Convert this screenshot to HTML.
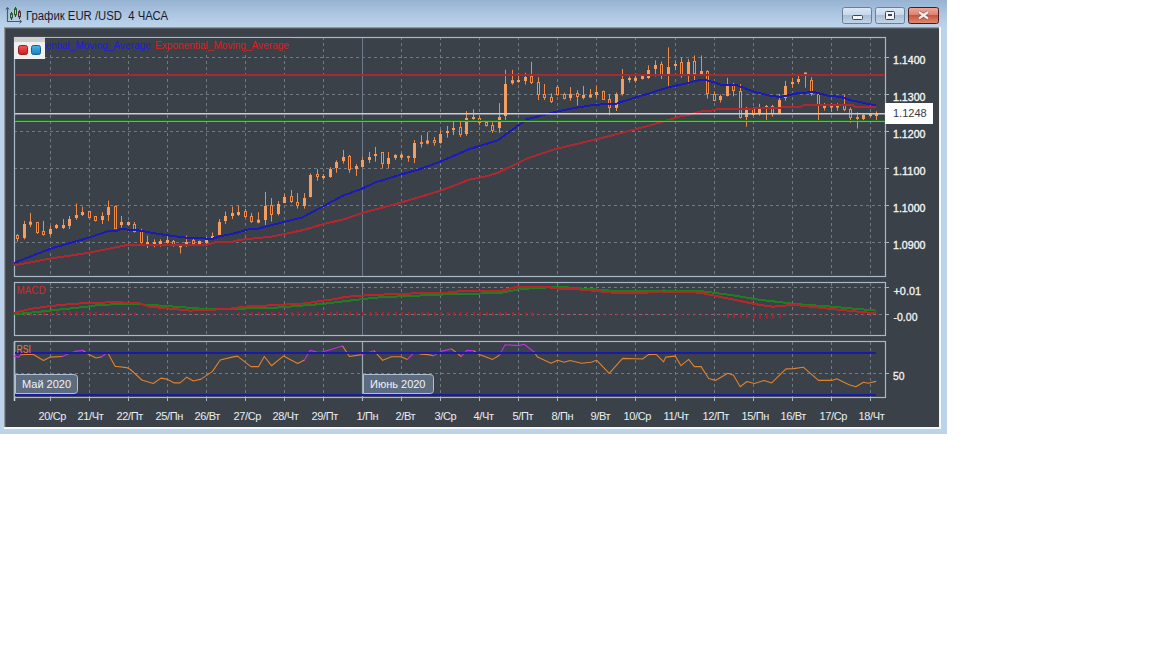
<!DOCTYPE html>
<html><head><meta charset="utf-8"><style>
html,body{margin:0;padding:0;background:#fff;width:1152px;height:648px;overflow:hidden}
#win{position:absolute;left:0;top:0;width:947px;height:434px;background:#bcd3eb}
#title{position:absolute;left:0;top:0;width:947px;height:27px;background:linear-gradient(#97b3d2,#b3cbe5 70%,#bcd4ea)}
#inner{position:absolute;left:4px;top:27px;width:937px;height:402px;background:#f4f8fb}
#dark{position:absolute;left:4px;top:27px;width:935px;height:400px;background:#3b4149;box-shadow:inset 1px 1px 0 #8e959c, inset 2px 2px 0 #555a61}
svg{position:absolute;left:0;top:0}
</style></head><body>
<div id="win"><div id="title"></div><div id="inner"></div><div id="dark"></div>

</div>
<svg width="1152" height="648" viewBox="0 0 1152 648">
<text x="26" y="20" font-family="Liberation Sans, sans-serif" font-size="12" fill="#1a1a2a" textLength="142" lengthAdjust="spacingAndGlyphs" xml:space="preserve">График EUR /USD  4 ЧАСА</text>
<!-- title icon -->
<path d="M7.5 8V21.5H21" stroke="#4a5a70" stroke-width="1.2" fill="none"/>
<path d="M5.8 9.5L7.5 7.3L9.2 9.5M19.5 19.8L21.7 21.5L19.5 23.2" stroke="#4a5a70" stroke-width="1" fill="none"/>
<path d="M11.5 12V20M15.5 7V17M19.5 10V19" stroke="#2e3e36" stroke-width="1"/>
<rect x="10.5" y="13.8" width="2" height="4" fill="#a8d098" stroke="#2c5a2c" stroke-width="1"/>
<rect x="14.5" y="8.8" width="2" height="6" fill="#a8d098" stroke="#2c5a2c" stroke-width="1"/>
<rect x="18.5" y="11.8" width="2" height="5" fill="#c89090" stroke="#5a3038" stroke-width="1"/>
<!-- buttons -->
<defs>
<linearGradient id="bg1" x1="0" y1="0" x2="0" y2="1"><stop offset="0" stop-color="#dce8f4"/><stop offset="0.45" stop-color="#c6d8ea"/><stop offset="0.5" stop-color="#a9bfd6"/><stop offset="1" stop-color="#c4d6e8"/></linearGradient>
<linearGradient id="bg2" x1="0" y1="0" x2="0" y2="1"><stop offset="0" stop-color="#f0a898"/><stop offset="0.45" stop-color="#de8270"/><stop offset="0.5" stop-color="#c8553e"/><stop offset="1" stop-color="#e08c74"/></linearGradient>
</defs>
<rect x="842.5" y="7.5" width="29" height="16" rx="2" fill="url(#bg1)" stroke="#6c7e94"/>
<rect x="875.5" y="7.5" width="29" height="16" rx="2" fill="url(#bg1)" stroke="#6c7e94"/>
<rect x="908.5" y="7.5" width="30" height="16" rx="2" fill="url(#bg2)" stroke="#4a1c1c"/>
<rect x="852.5" y="15.5" width="10" height="4" rx="1" fill="#f4f4f4" stroke="#3a4656"/>
<rect x="885.5" y="11.5" width="9" height="8" rx="1" fill="#f4f4f4" stroke="#3a4656"/><rect x="888" y="14" width="4" height="2" fill="#3a4656"/>
<path d="M919 12L928 18.5M928 12L919 18.5" stroke="#6a3030" stroke-width="3.6" opacity="0.6"/>
<path d="M919 12L928 18.5M928 12L919 18.5" stroke="#f4f0f0" stroke-width="2.2"/>
<path d="M50.5 37V276 M50.5 283V335 M50.5 342V397 M89.5 37V276 M89.5 283V335 M89.5 342V397 M128.5 37V276 M128.5 283V335 M128.5 342V397 M167.5 37V276 M167.5 283V335 M167.5 342V397 M206.5 37V276 M206.5 283V335 M206.5 342V397 M245.5 37V276 M245.5 283V335 M245.5 342V397 M284.5 37V276 M284.5 283V335 M284.5 342V397 M323.5 37V276 M323.5 283V335 M323.5 342V397 M362.5 37V276 M362.5 283V335 M362.5 342V397 M401.5 37V276 M401.5 283V335 M401.5 342V397 M440.5 37V276 M440.5 283V335 M440.5 342V397 M479.5 37V276 M479.5 283V335 M479.5 342V397 M518.5 37V276 M518.5 283V335 M518.5 342V397 M557.5 37V276 M557.5 283V335 M557.5 342V397 M596.5 37V276 M596.5 283V335 M596.5 342V397 M635.5 37V276 M635.5 283V335 M635.5 342V397 M675.5 37V276 M675.5 283V335 M675.5 342V397 M714.5 37V276 M714.5 283V335 M714.5 342V397 M753.5 37V276 M753.5 283V335 M753.5 342V397 M792.5 37V276 M792.5 283V335 M792.5 342V397 M831.5 37V276 M831.5 283V335 M831.5 342V397 M870.5 37V276 M870.5 283V335 M870.5 342V397 M14 57.5H885 M14 94.5H885 M14 131.5H885 M14 168.5H885 M14 205.5H885 M14 242.5H885 M50 287.5H885 M15 314.5H885 M15 373.5H885" stroke="#6f7a85" stroke-width="1" stroke-dasharray="3 3" fill="none"/>
<path d="M362.5 38V276M362.5 283V335" stroke="#6c7a89" stroke-width="1" fill="none"/>
<path d="M362.5 342V401" stroke="#9aaab4" stroke-width="1.2" fill="none"/>
<path d="M14.5 342V401" stroke="#c9ddd8" stroke-width="1.5" fill="none"/>
<path d="M50.5 397V401 M89.5 397V401 M128.5 397V401 M167.5 397V401 M206.5 397V401 M245.5 397V401 M284.5 397V401 M323.5 397V401 M362.5 397V401 M401.5 397V401 M440.5 397V401 M479.5 397V401 M518.5 397V401 M557.5 397V401 M596.5 397V401 M635.5 397V401 M675.5 397V401 M714.5 397V401 M753.5 397V401 M792.5 397V401 M831.5 397V401 M870.5 397V401 M885 57.5H889 M885 94.5H889 M885 131.5H889 M885 168.5H889 M885 205.5H889 M885 242.5H889 M885 287.5H889 M885 314.5H889 M885 373.5H889" stroke="#a7b8c8" stroke-width="1" fill="none"/>
<rect x="14.5" y="37.5" width="871" height="239" fill="none" stroke="#a7b8c8" stroke-width="1.2"/>
<rect x="14.5" y="282.5" width="871" height="53" fill="none" stroke="#a7b8c8" stroke-width="1.2"/>
<rect x="14.5" y="341.5" width="871" height="56" fill="none" stroke="#a7b8c8" stroke-width="1.2"/>
<path d="M17.5 233.9V241.7 M24.5 220.9V239.4 M30.5 212.9V227.1 M37.5 221.9V233.9 M43.5 220.9V235.7 M50.5 225.9V235.7 M56.5 224.0V229.0 M63.5 219.0V229.0 M69.5 216.0V229.0 M76.5 203.6V219.7 M82.5 206.7V216.0 M89.5 211.0V217.8 M95.5 216.0V221.5 M102.5 212.3V224.0 M108.5 200.6V221.0 M115.5 205.5V229.0 M121.5 216.0V227.7 M128.5 221.4V225.9 M134.5 222.0V232.5 M141.5 228.8V243.6 M147.5 235.6V248.0 M154.5 239.3V247.3 M160.5 239.3V246.7 M167.5 234.4V242.4 M173.5 240.0V246.7 M180.5 244.9V253.5 M186.5 235.6V246.7 M193.5 238.0V245.5 M199.5 240.6V244.3 M206.5 236.9V245.5 M212.5 232.5V238.1 M219.5 219.0V235.6 M225.5 211.5V223.9 M232.5 206.6V219.0 M238.5 205.4V215.9 M245.5 209.0V217.7 M251.5 212.9V222.8 M258.5 212.3V223.4 M265.5 191.9V225.0 M271.5 198.1V221.5 M278.5 201.2V215.4 M284.5 193.8V203.0 M291.5 190.0V203.0 M297.5 193.1V208.6 M304.5 193.1V208.6 M310.5 173.4V197.5 M317.5 169.1V180.8 M323.5 174.0V179.6 M330.5 167.2V177.7 M336.5 160.4V172.8 M343.5 149.9V163.5 M349.5 154.9V172.8 M356.5 164.1V175.9 M362.5 156.8V167.3 M369.5 151.9V163.0 M375.5 146.9V161.7 M382.5 151.9V167.9 M388.5 151.9V167.9 M395.5 154.3V159.9 M401.5 153.1V159.9 M408.5 155.6V161.7 M414.5 140.1V163.0 M421.5 135.2V147.5 M427.5 132.1V144.4 M434.5 137.0V145.7 M440.5 130.2V143.8 M447.5 125.9V137.7 M453.5 120.4V135.2 M460.5 120.4V137.0 M466.5 111.1V135.8 M473.5 109.3V119.8 M479.5 115.5V125.4 M486.5 121.7V126.6 M492.5 122.3V132.8 M499.5 103.1V132.8 M505.5 69.8V121.0 M512.5 69.8V84.6 M518.5 73.5V82.8 M525.5 72.9V84.6 M531.5 61.8V84.0 M538.5 77.2V100.0 M544.5 84.0V100.0 M551.5 93.3V103.1 M557.5 85.2V95.7 M564.5 92.7V99.4 M570.5 87.1V100.7 M577.5 90.2V105.6 M583.5 85.9V99.4 M590.5 89.0V97.6 M596.5 85.7V98.0 M603.5 90.6V99.9 M609.5 94.3V115.3 M616.5 92.5V111.0 M622.5 69.0V95.6 M629.5 76.4V82.6 M635.5 74.0V82.6 M642.5 75.8V79.5 M648.5 65.3V78.9 M655.5 60.4V76.4 M661.5 61.6V78.9 M668.5 47.4V86.9 M675.5 60.4V70.2 M681.5 57.3V77.7 M688.5 59.1V84.4 M694.5 55.4V80.1 M701.5 55.4V74.6 M707.5 70.2V98.6 M714.5 92.0V101.3 M720.5 94.5V102.5 M727.5 77.8V96.4 M733.5 82.8V96.4 M740.5 84.0V118.6 M746.5 106.9V126.6 M753.5 107.5V115.5 M759.5 103.8V115.5 M766.5 105.0V121.0 M772.5 105.0V116.7 M779.5 93.9V114.3 M785.5 80.9V100.7 M792.5 77.8V87.7 M798.5 76.0V84.0 M805.5 72.9V87.7 M811.5 77.2V95.7 M818.5 92.0V121.0 M824.5 103.1V110.6 M831.5 103.2V111.9 M837.5 103.2V110.8 M844.5 94.6V111.3 M850.5 107.5V122.7 M857.5 112.4V128.6 M863.5 114.0V120.5 M870.5 112.9V117.3 M876.5 111.3V121.0" stroke="#f08a46" stroke-width="1" fill="none"/>
<rect x="23" y="224" width="3" height="14" fill="#f59d5e"/>
<rect x="29" y="221.7" width="3" height="3" fill="#f59d5e"/>
<rect x="49" y="229" width="3" height="5" fill="#f59d5e"/>
<rect x="55" y="225.0" width="3" height="3" fill="#f59d5e"/>
<rect x="62" y="225.0" width="3" height="3" fill="#f59d5e"/>
<rect x="68" y="219" width="3" height="7" fill="#f59d5e"/>
<rect x="75" y="215" width="3" height="3" fill="#f59d5e"/>
<rect x="81" y="212.0" width="3" height="3" fill="#f59d5e"/>
<rect x="101" y="216" width="3" height="4" fill="#f59d5e"/>
<rect x="107" y="207" width="3" height="8" fill="#f59d5e"/>
<rect x="120" y="222" width="3" height="3" fill="#f59d5e"/>
<rect x="127" y="222.0" width="3" height="3" fill="#f59d5e"/>
<rect x="146" y="242" width="3" height="4" fill="#f59d5e"/>
<rect x="153" y="242" width="3" height="4" fill="#f59d5e"/>
<rect x="159" y="241" width="3" height="5" fill="#f59d5e"/>
<rect x="166" y="240.0" width="3" height="3" fill="#f59d5e"/>
<rect x="179" y="244.3" width="3" height="3" fill="#f59d5e"/>
<rect x="185" y="242" width="3" height="4" fill="#f59d5e"/>
<rect x="198" y="241.0" width="3" height="3" fill="#f59d5e"/>
<rect x="205" y="239" width="3" height="4" fill="#f59d5e"/>
<rect x="211" y="236" width="3" height="2" fill="#f59d5e"/>
<rect x="218" y="222" width="3" height="13" fill="#f59d5e"/>
<rect x="224" y="216" width="3" height="5" fill="#f59d5e"/>
<rect x="231" y="213.0" width="3" height="3" fill="#f59d5e"/>
<rect x="237" y="212.0" width="3" height="3" fill="#f59d5e"/>
<rect x="257" y="219.7" width="3" height="3" fill="#f59d5e"/>
<rect x="264" y="206" width="3" height="14" fill="#f59d5e"/>
<rect x="277" y="204" width="3" height="10" fill="#f59d5e"/>
<rect x="283" y="197" width="3" height="6" fill="#f59d5e"/>
<rect x="303" y="198" width="3" height="8" fill="#f59d5e"/>
<rect x="309" y="175" width="3" height="22" fill="#f59d5e"/>
<rect x="322" y="176" width="3" height="2" fill="#f59d5e"/>
<rect x="329" y="169" width="3" height="8" fill="#f59d5e"/>
<rect x="335" y="162" width="3" height="6" fill="#f59d5e"/>
<rect x="342" y="157" width="3" height="4" fill="#f59d5e"/>
<rect x="355" y="166.1" width="3" height="3" fill="#f59d5e"/>
<rect x="361" y="160" width="3" height="7" fill="#f59d5e"/>
<rect x="368" y="157" width="3" height="3" fill="#f59d5e"/>
<rect x="374" y="154" width="3" height="2" fill="#f59d5e"/>
<rect x="387" y="158" width="3" height="6" fill="#f59d5e"/>
<rect x="394" y="154.9" width="3" height="3" fill="#f59d5e"/>
<rect x="400" y="154.7" width="3" height="3" fill="#f59d5e"/>
<rect x="413" y="143" width="3" height="15" fill="#f59d5e"/>
<rect x="426" y="140.5" width="3" height="3" fill="#f59d5e"/>
<rect x="439" y="134" width="3" height="9" fill="#f59d5e"/>
<rect x="446" y="131" width="3" height="2" fill="#f59d5e"/>
<rect x="452" y="128" width="3" height="2" fill="#f59d5e"/>
<rect x="465" y="118" width="3" height="16" fill="#f59d5e"/>
<rect x="472" y="117" width="3" height="2" fill="#f59d5e"/>
<rect x="498" y="117" width="3" height="11" fill="#f59d5e"/>
<rect x="504" y="84" width="3" height="32" fill="#f59d5e"/>
<rect x="511" y="80.2" width="3" height="3" fill="#f59d5e"/>
<rect x="517" y="80" width="3" height="2" fill="#f59d5e"/>
<rect x="524" y="77" width="3" height="4" fill="#f59d5e"/>
<rect x="569" y="94" width="3" height="4" fill="#f59d5e"/>
<rect x="582" y="95.0" width="3" height="3" fill="#f59d5e"/>
<rect x="589" y="94.5" width="3" height="3" fill="#f59d5e"/>
<rect x="595" y="92" width="3" height="3" fill="#f59d5e"/>
<rect x="615" y="94" width="3" height="14" fill="#f59d5e"/>
<rect x="621" y="79" width="3" height="15" fill="#f59d5e"/>
<rect x="628" y="78" width="3" height="2" fill="#f59d5e"/>
<rect x="634" y="77.8" width="3" height="3" fill="#f59d5e"/>
<rect x="641" y="76.0" width="3" height="3" fill="#f59d5e"/>
<rect x="647" y="70" width="3" height="8" fill="#f59d5e"/>
<rect x="654" y="65" width="3" height="4" fill="#f59d5e"/>
<rect x="667" y="67" width="3" height="7" fill="#f59d5e"/>
<rect x="674" y="64" width="3" height="2" fill="#f59d5e"/>
<rect x="687" y="62" width="3" height="12" fill="#f59d5e"/>
<rect x="700" y="71.0" width="3" height="3" fill="#f59d5e"/>
<rect x="719" y="96" width="3" height="4" fill="#f59d5e"/>
<rect x="726" y="85" width="3" height="11" fill="#f59d5e"/>
<rect x="745" y="109" width="3" height="8" fill="#f59d5e"/>
<rect x="758" y="109" width="3" height="4" fill="#f59d5e"/>
<rect x="765" y="106.0" width="3" height="3" fill="#f59d5e"/>
<rect x="778" y="100" width="3" height="13" fill="#f59d5e"/>
<rect x="784" y="86" width="3" height="12" fill="#f59d5e"/>
<rect x="791" y="82" width="3" height="2" fill="#f59d5e"/>
<rect x="797" y="79.0" width="3" height="3" fill="#f59d5e"/>
<rect x="804" y="72.5" width="3" height="3" fill="#f59d5e"/>
<rect x="823" y="105" width="3" height="3" fill="#f59d5e"/>
<rect x="830" y="104.5" width="3" height="3" fill="#f59d5e"/>
<rect x="836" y="104.5" width="3" height="3" fill="#f59d5e"/>
<rect x="862" y="115" width="3" height="4" fill="#f59d5e"/>
<rect x="869" y="114" width="3" height="2" fill="#f59d5e"/>
<rect x="875" y="113.0" width="3" height="3" fill="#f59d5e"/>
<rect x="16.5" y="235.5" width="2" height="3" fill="#3b4149" stroke="#f08a46" stroke-width="1"/>
<rect x="36.5" y="222.5" width="2" height="10" fill="#3b4149" stroke="#f08a46" stroke-width="1"/>
<rect x="42.5" y="231.5" width="2" height="3" fill="#3b4149" stroke="#f08a46" stroke-width="1"/>
<rect x="88.5" y="211.5" width="2" height="6" fill="#3b4149" stroke="#f08a46" stroke-width="1"/>
<rect x="94.5" y="216.5" width="2" height="4" fill="#3b4149" stroke="#f08a46" stroke-width="1"/>
<rect x="114.5" y="206.5" width="2" height="22" fill="#3b4149" stroke="#f08a46" stroke-width="1"/>
<rect x="133.5" y="224.5" width="2" height="7" fill="#3b4149" stroke="#f08a46" stroke-width="1"/>
<rect x="140.5" y="231.5" width="2" height="11" fill="#3b4149" stroke="#f08a46" stroke-width="1"/>
<rect x="172.5" y="241.5" width="2" height="4" fill="#3b4149" stroke="#f08a46" stroke-width="1"/>
<rect x="192.5" y="240.5" width="2" height="3" fill="#3b4149" stroke="#f08a46" stroke-width="1"/>
<rect x="244.5" y="211.5" width="2" height="5" fill="#3b4149" stroke="#f08a46" stroke-width="1"/>
<rect x="250.5" y="216.5" width="2" height="5" fill="#3b4149" stroke="#f08a46" stroke-width="1"/>
<rect x="270.5" y="205.5" width="2" height="9" fill="#3b4149" stroke="#f08a46" stroke-width="1"/>
<rect x="290.5" y="196.5" width="2" height="5" fill="#3b4149" stroke="#f08a46" stroke-width="1"/>
<rect x="296.5" y="202.5" width="2" height="3" fill="#3b4149" stroke="#f08a46" stroke-width="1"/>
<rect x="316.5" y="174.5" width="2" height="2" fill="#3b4149" stroke="#f08a46" stroke-width="1"/>
<rect x="348.5" y="156.5" width="2" height="13" fill="#3b4149" stroke="#f08a46" stroke-width="1"/>
<rect x="381.5" y="152.5" width="2" height="11" fill="#3b4149" stroke="#f08a46" stroke-width="1"/>
<rect x="407.5" y="156.5" width="2" height="1" fill="#3b4149" stroke="#f08a46" stroke-width="1"/>
<rect x="420.5" y="142.5" width="2" height="1" fill="#3b4149" stroke="#f08a46" stroke-width="1"/>
<rect x="433.5" y="140.5" width="2" height="2" fill="#3b4149" stroke="#f08a46" stroke-width="1"/>
<rect x="459.5" y="127.5" width="2" height="7" fill="#3b4149" stroke="#f08a46" stroke-width="1"/>
<rect x="478.5" y="118.5" width="2" height="4" fill="#3b4149" stroke="#f08a46" stroke-width="1"/>
<rect x="485.5" y="122.5" width="2" height="3" fill="#3b4149" stroke="#f08a46" stroke-width="1"/>
<rect x="491.5" y="125.5" width="2" height="5" fill="#3b4149" stroke="#f08a46" stroke-width="1"/>
<rect x="530.5" y="76.5" width="2" height="6" fill="#3b4149" stroke="#f08a46" stroke-width="1"/>
<rect x="537.5" y="82.5" width="2" height="12" fill="#3b4149" stroke="#f08a46" stroke-width="1"/>
<rect x="543.5" y="94.5" width="2" height="3" fill="#3b4149" stroke="#f08a46" stroke-width="1"/>
<rect x="550.5" y="97.5" width="2" height="4" fill="#3b4149" stroke="#f08a46" stroke-width="1"/>
<rect x="556.5" y="87.5" width="2" height="7" fill="#3b4149" stroke="#f08a46" stroke-width="1"/>
<rect x="563.5" y="94.5" width="2" height="4" fill="#3b4149" stroke="#f08a46" stroke-width="1"/>
<rect x="576.5" y="93.5" width="2" height="3" fill="#3b4149" stroke="#f08a46" stroke-width="1"/>
<rect x="602.5" y="91.5" width="2" height="8" fill="#3b4149" stroke="#f08a46" stroke-width="1"/>
<rect x="608.5" y="99.5" width="2" height="8" fill="#3b4149" stroke="#f08a46" stroke-width="1"/>
<rect x="660.5" y="64.5" width="2" height="10" fill="#3b4149" stroke="#f08a46" stroke-width="1"/>
<rect x="680.5" y="62.5" width="2" height="12" fill="#3b4149" stroke="#f08a46" stroke-width="1"/>
<rect x="693.5" y="61.5" width="2" height="12" fill="#3b4149" stroke="#f08a46" stroke-width="1"/>
<rect x="706.5" y="71.5" width="2" height="22" fill="#3b4149" stroke="#f08a46" stroke-width="1"/>
<rect x="713.5" y="94.5" width="2" height="6" fill="#3b4149" stroke="#f08a46" stroke-width="1"/>
<rect x="732.5" y="84.5" width="2" height="6" fill="#3b4149" stroke="#f08a46" stroke-width="1"/>
<rect x="739.5" y="91.5" width="2" height="26" fill="#3b4149" stroke="#f08a46" stroke-width="1"/>
<rect x="752.5" y="109.5" width="2" height="5" fill="#3b4149" stroke="#f08a46" stroke-width="1"/>
<rect x="771.5" y="106.5" width="2" height="7" fill="#3b4149" stroke="#f08a46" stroke-width="1"/>
<rect x="810.5" y="80.5" width="2" height="13" fill="#3b4149" stroke="#f08a46" stroke-width="1"/>
<rect x="817.5" y="94.5" width="2" height="11" fill="#3b4149" stroke="#f08a46" stroke-width="1"/>
<rect x="843.5" y="104.5" width="2" height="5" fill="#3b4149" stroke="#f08a46" stroke-width="1"/>
<rect x="849.5" y="109.5" width="2" height="8" fill="#3b4149" stroke="#f08a46" stroke-width="1"/>
<rect x="856.5" y="117.5" width="2" height="1" fill="#3b4149" stroke="#f08a46" stroke-width="1"/>
<polyline points="14.0,265.5 50.0,258.6 89.0,252.8 128.0,244.8 206.0,244.9 215.0,242.4 230.0,242.4 240.0,239.8 271.0,236.7 302.0,230.4 323.0,224.2 345.0,219.0 363.0,212.7 402.0,202.3 440.0,190.8 470.0,179.5 485.0,176.6 498.0,172.8 527.0,158.5 556.0,148.9 596.0,139.4 634.0,129.8 661.0,122.2 680.0,116.5 690.0,114.5 700.0,111.6 712.0,110.6 718.0,109.1 780.0,108.1 782.0,106.9 800.0,106.9 805.0,104.5 852.0,104.5 855.0,107.0 876.0,107.0" fill="none" stroke="#b0282f" stroke-width="2" shape-rendering="crispEdges"/>
<polyline points="14.0,262.9 50.5,248.7 89.0,237.6 109.0,230.8 118.0,230.5 120.0,228.9 141.0,230.7 150.0,232.5 165.0,234.9 180.0,236.9 190.0,238.1 213.0,238.7 220.0,236.3 235.0,233.2 248.0,229.5 257.0,229.0 268.0,226.0 302.0,217.5 323.0,206.5 342.0,196.0 363.0,188.3 375.0,182.5 402.0,174.2 420.0,169.1 440.0,161.7 470.0,148.9 498.0,140.3 508.0,132.7 527.0,119.3 546.0,114.2 556.0,111.7 575.0,107.9 596.0,104.6 615.0,104.2 620.0,102.3 650.0,93.1 670.0,86.9 690.0,82.6 695.0,80.7 705.0,80.1 716.0,82.8 720.0,84.6 735.0,84.6 745.0,88.3 755.0,92.0 770.0,95.7 780.0,97.0 792.0,94.5 800.0,92.7 815.0,92.3 830.0,96.2 840.0,96.7 850.0,100.0 870.0,104.3 876.0,105.4" fill="none" stroke="#1a1ab8" stroke-width="2" shape-rendering="crispEdges"/>
<rect x="15" y="74" width="870" height="2" fill="#a8292e"/>
<rect x="15" y="113" width="870" height="1.5" fill="#c9ccd2"/>
<rect x="15" y="120" width="870" height="1" fill="#1a6e1a"/><rect x="15" y="121" width="870" height="1" fill="#58c058"/>
<rect x="17" y="312.2" width="2" height="3.8" fill="#a82430"/>
<rect x="24" y="311.8" width="2" height="4.2" fill="#a82430"/>
<rect x="30" y="311.5" width="2" height="4.5" fill="#a82430"/>
<rect x="37" y="311.4" width="2" height="4.5" fill="#a82430"/>
<rect x="43" y="311.3" width="2" height="4.5" fill="#a82430"/>
<rect x="50" y="311.2" width="2" height="4.5" fill="#a82430"/>
<rect x="56" y="311.2" width="2" height="4.5" fill="#a82430"/>
<rect x="63" y="311.2" width="2" height="4.5" fill="#a82430"/>
<rect x="69" y="311.3" width="2" height="4.5" fill="#a82430"/>
<rect x="76" y="311.3" width="2" height="4.5" fill="#a82430"/>
<rect x="82" y="311.4" width="2" height="4.5" fill="#a82430"/>
<rect x="89" y="311.6" width="2" height="4.4" fill="#a82430"/>
<rect x="95" y="311.9" width="2" height="4.1" fill="#a82430"/>
<rect x="102" y="312.1" width="2" height="3.9" fill="#a82430"/>
<rect x="108" y="312.2" width="2" height="3.8" fill="#a82430"/>
<rect x="115" y="312.2" width="2" height="3.8" fill="#a82430"/>
<rect x="121" y="312.3" width="2" height="3.7" fill="#a82430"/>
<rect x="128" y="312.5" width="2" height="3.5" fill="#a82430"/>
<rect x="134" y="312.5" width="2" height="3.5" fill="#a82430"/>
<rect x="141" y="313.5" width="2" height="2" fill="#a82430" opacity="0.7"/>
<rect x="147" y="313.5" width="2" height="2" fill="#a82430" opacity="0.7"/>
<rect x="154" y="313.5" width="2" height="2" fill="#a82430" opacity="0.7"/>
<rect x="160" y="313.5" width="2" height="2" fill="#a82430" opacity="0.7"/>
<rect x="167" y="313.5" width="2" height="2" fill="#a82430" opacity="0.7"/>
<rect x="173" y="313.5" width="2" height="2" fill="#a82430" opacity="0.7"/>
<rect x="180" y="313.5" width="2" height="2" fill="#a82430" opacity="0.7"/>
<rect x="186" y="313.5" width="2" height="2" fill="#a82430" opacity="0.7"/>
<rect x="193" y="313.5" width="2" height="2" fill="#a82430" opacity="0.7"/>
<rect x="199" y="313.5" width="2" height="2" fill="#a82430" opacity="0.7"/>
<rect x="206" y="313.5" width="2" height="2" fill="#a82430" opacity="0.7"/>
<rect x="212" y="313.5" width="2" height="2" fill="#a82430" opacity="0.7"/>
<rect x="219" y="313.5" width="2" height="2" fill="#a82430" opacity="0.7"/>
<rect x="225" y="313.5" width="2" height="2" fill="#a82430" opacity="0.7"/>
<rect x="232" y="313.5" width="2" height="2" fill="#a82430" opacity="0.7"/>
<rect x="238" y="312.5" width="2" height="3.5" fill="#a82430"/>
<rect x="245" y="312.2" width="2" height="3.8" fill="#a82430"/>
<rect x="251" y="312.2" width="2" height="3.8" fill="#a82430"/>
<rect x="258" y="312.1" width="2" height="3.9" fill="#a82430"/>
<rect x="265" y="312.0" width="2" height="4.0" fill="#a82430"/>
<rect x="271" y="312.0" width="2" height="4.0" fill="#a82430"/>
<rect x="278" y="312.0" width="2" height="4.0" fill="#a82430"/>
<rect x="284" y="312.0" width="2" height="4.0" fill="#a82430"/>
<rect x="291" y="312.1" width="2" height="3.9" fill="#a82430"/>
<rect x="297" y="312.1" width="2" height="3.9" fill="#a82430"/>
<rect x="304" y="312.2" width="2" height="3.8" fill="#a82430"/>
<rect x="310" y="312.1" width="2" height="3.9" fill="#a82430"/>
<rect x="317" y="311.9" width="2" height="4.1" fill="#a82430"/>
<rect x="323" y="311.7" width="2" height="4.3" fill="#a82430"/>
<rect x="330" y="311.7" width="2" height="4.3" fill="#a82430"/>
<rect x="336" y="311.6" width="2" height="4.4" fill="#a82430"/>
<rect x="343" y="311.4" width="2" height="4.5" fill="#a82430"/>
<rect x="349" y="311.4" width="2" height="4.5" fill="#a82430"/>
<rect x="356" y="311.5" width="2" height="4.5" fill="#a82430"/>
<rect x="362" y="311.6" width="2" height="4.4" fill="#a82430"/>
<rect x="369" y="311.7" width="2" height="4.3" fill="#a82430"/>
<rect x="375" y="311.8" width="2" height="4.2" fill="#a82430"/>
<rect x="382" y="312.0" width="2" height="4.0" fill="#a82430"/>
<rect x="388" y="312.0" width="2" height="4.0" fill="#a82430"/>
<rect x="395" y="312.0" width="2" height="4.0" fill="#a82430"/>
<rect x="401" y="312.0" width="2" height="4.0" fill="#a82430"/>
<rect x="408" y="312.0" width="2" height="4.0" fill="#a82430"/>
<rect x="414" y="312.1" width="2" height="3.9" fill="#a82430"/>
<rect x="421" y="312.1" width="2" height="3.9" fill="#a82430"/>
<rect x="427" y="312.1" width="2" height="3.9" fill="#a82430"/>
<rect x="434" y="312.2" width="2" height="3.8" fill="#a82430"/>
<rect x="440" y="312.3" width="2" height="3.7" fill="#a82430"/>
<rect x="447" y="312.3" width="2" height="3.7" fill="#a82430"/>
<rect x="453" y="312.1" width="2" height="3.9" fill="#a82430"/>
<rect x="460" y="311.9" width="2" height="4.1" fill="#a82430"/>
<rect x="466" y="311.8" width="2" height="4.2" fill="#a82430"/>
<rect x="473" y="311.9" width="2" height="4.1" fill="#a82430"/>
<rect x="479" y="311.9" width="2" height="4.1" fill="#a82430"/>
<rect x="486" y="312.0" width="2" height="4.0" fill="#a82430"/>
<rect x="492" y="312.1" width="2" height="3.9" fill="#a82430"/>
<rect x="499" y="312.1" width="2" height="3.9" fill="#a82430"/>
<rect x="505" y="312.1" width="2" height="3.9" fill="#a82430"/>
<rect x="512" y="312.0" width="2" height="4.0" fill="#a82430"/>
<rect x="518" y="312.1" width="2" height="3.9" fill="#a82430"/>
<rect x="525" y="312.4" width="2" height="3.6" fill="#a82430"/>
<rect x="531" y="312.5" width="2" height="3.5" fill="#a82430"/>
<rect x="538" y="313.5" width="2" height="2" fill="#a82430" opacity="0.7"/>
<rect x="544" y="313.5" width="2" height="2" fill="#a82430" opacity="0.7"/>
<rect x="551" y="313.5" width="2" height="2" fill="#a82430" opacity="0.7"/>
<rect x="557" y="313.5" width="2" height="2" fill="#a82430" opacity="0.7"/>
<rect x="564" y="313.5" width="2" height="2" fill="#a82430" opacity="0.7"/>
<rect x="570" y="313.5" width="2" height="2" fill="#a82430" opacity="0.7"/>
<rect x="577" y="313.5" width="2" height="2" fill="#a82430" opacity="0.7"/>
<rect x="583" y="313.5" width="2" height="2" fill="#a82430" opacity="0.7"/>
<rect x="590" y="313.5" width="2" height="2" fill="#a82430" opacity="0.7"/>
<rect x="596" y="313.5" width="2" height="2" fill="#a82430" opacity="0.7"/>
<rect x="603" y="313.5" width="2" height="2" fill="#a82430" opacity="0.7"/>
<rect x="609" y="313.5" width="2" height="2" fill="#a82430" opacity="0.7"/>
<rect x="616" y="313.5" width="2" height="2" fill="#a82430" opacity="0.7"/>
<rect x="622" y="313.5" width="2" height="2" fill="#a82430" opacity="0.7"/>
<rect x="629" y="313.5" width="2" height="2" fill="#a82430" opacity="0.7"/>
<rect x="635" y="313.5" width="2" height="2" fill="#a82430" opacity="0.7"/>
<rect x="642" y="313.5" width="2" height="2" fill="#a82430" opacity="0.7"/>
<rect x="648" y="313.5" width="2" height="2" fill="#a82430" opacity="0.7"/>
<rect x="655" y="313.5" width="2" height="2" fill="#a82430" opacity="0.7"/>
<rect x="661" y="313.5" width="2" height="2" fill="#a82430" opacity="0.7"/>
<rect x="668" y="313.5" width="2" height="2" fill="#a82430" opacity="0.7"/>
<rect x="675" y="313.5" width="2" height="2" fill="#a82430" opacity="0.7"/>
<rect x="681" y="313.5" width="2" height="2" fill="#a82430" opacity="0.7"/>
<rect x="688" y="313.5" width="2" height="2" fill="#a82430" opacity="0.7"/>
<rect x="694" y="313.5" width="2" height="2" fill="#a82430" opacity="0.7"/>
<rect x="701" y="313.5" width="2" height="2" fill="#a82430" opacity="0.7"/>
<rect x="707" y="313.5" width="2" height="2" fill="#a82430" opacity="0.7"/>
<rect x="714" y="313.5" width="2" height="2" fill="#a82430" opacity="0.7"/>
<rect x="720" y="313.5" width="2" height="2" fill="#a82430" opacity="0.7"/>
<rect x="727" y="313" width="2" height="4.9" fill="#a82430"/>
<rect x="733" y="313" width="2" height="5.1" fill="#a82430"/>
<rect x="740" y="313" width="2" height="5.2" fill="#a82430"/>
<rect x="746" y="313" width="2" height="5.3" fill="#a82430"/>
<rect x="753" y="313" width="2" height="5.4" fill="#a82430"/>
<rect x="759" y="313" width="2" height="5.6" fill="#a82430"/>
<rect x="766" y="313" width="2" height="5.6" fill="#a82430"/>
<rect x="772" y="313" width="2" height="5.7" fill="#a82430"/>
<rect x="779" y="313" width="2" height="5.1" fill="#a82430"/>
<rect x="785" y="313.5" width="2" height="2" fill="#a82430" opacity="0.7"/>
<rect x="792" y="313.5" width="2" height="2" fill="#a82430" opacity="0.7"/>
<rect x="798" y="313.5" width="2" height="2" fill="#a82430" opacity="0.7"/>
<rect x="805" y="313.5" width="2" height="2" fill="#a82430" opacity="0.7"/>
<rect x="811" y="313.5" width="2" height="2" fill="#a82430" opacity="0.7"/>
<rect x="818" y="313.5" width="2" height="2" fill="#a82430" opacity="0.7"/>
<rect x="824" y="313.5" width="2" height="2" fill="#a82430" opacity="0.7"/>
<rect x="831" y="313.5" width="2" height="2" fill="#a82430" opacity="0.7"/>
<rect x="837" y="313.5" width="2" height="2" fill="#a82430" opacity="0.7"/>
<rect x="844" y="313.5" width="2" height="2" fill="#a82430" opacity="0.7"/>
<rect x="850" y="313.5" width="2" height="2" fill="#a82430" opacity="0.7"/>
<rect x="857" y="313.5" width="2" height="2" fill="#a82430" opacity="0.7"/>
<rect x="863" y="313.5" width="2" height="2" fill="#a82430" opacity="0.7"/>
<rect x="870" y="313.5" width="2" height="2" fill="#a82430" opacity="0.7"/>
<rect x="876" y="313.5" width="2" height="2" fill="#a82430" opacity="0.7"/>
<polyline points="14.0,314.4 50.0,310.6 87.0,306.7 100.0,304.8 130.0,303.9 150.0,304.8 175.0,306.7 200.0,308.6 228.0,309.0 276.0,307.7 323.0,303.9 362.0,299.1 381.0,297.2 425.0,295.3 448.0,294.3 501.0,293.0 520.0,289.0 545.0,287.6 559.0,286.7 578.0,288.2 597.0,289.5 616.0,291.1 664.0,290.5 704.0,291.5 733.0,295.3 755.0,299.1 794.0,303.9 832.0,306.7 876.0,310.6" fill="none" stroke="#1e7e22" stroke-width="2" shape-rendering="crispEdges"/>
<polyline points="14.0,312.8 25.0,310.2 30.0,309.0 45.0,306.7 67.0,304.4 87.0,302.9 115.0,302.3 138.0,302.9 150.0,306.7 170.0,308.6 190.0,310.6 228.0,309.0 243.0,306.7 281.0,304.8 306.0,303.3 323.0,300.6 335.0,299.1 346.0,296.8 373.0,294.9 425.0,293.0 444.0,293.0 463.0,290.9 501.0,290.9 516.0,287.1 548.0,287.1 560.0,289.0 574.0,289.0 595.0,290.9 614.0,292.8 644.0,292.8 660.0,291.5 692.0,292.0 704.0,293.4 717.0,296.2 740.0,301.0 759.0,304.8 773.0,306.7 794.0,304.8 828.0,308.6 851.0,310.9 876.0,313.4" fill="none" stroke="#b8262a" stroke-width="2" shape-rendering="crispEdges"/>
<path d="M20.6 354.8L33.0 354.2 M33.0 354.2L43.5 360.5 M43.5 360.5L50.2 357.1 M50.2 357.1L62.6 356.5 M82.7 350.4L88.4 354.2 M88.4 354.2L96.0 358.0 M96.0 358.0L101.8 356.7 M107.5 352.3L115.1 366.3 M115.1 366.3L126.6 367.6 M126.6 367.6L130.4 369.5 M130.4 369.5L141.9 380.0 M141.9 380.0L153.3 383.5 M153.3 383.5L161.0 378.1 M161.0 378.1L166.7 379.1 M166.7 379.1L174.3 382.9 M174.3 382.9L180.0 382.9 M180.0 382.9L186.8 377.2 M186.8 377.2L193.4 381.0 M193.4 381.0L201.1 379.1 M201.1 379.1L212.5 371.4 M212.5 371.4L220.2 360.0 M220.2 360.0L232.0 357.1 M232.0 357.1L237.5 356.1 M237.5 356.1L250.9 366.6 M250.9 366.6L258.6 366.6 M258.6 366.6L264.3 356.5 M264.3 356.5L271.5 365.7 M271.5 365.7L283.4 356.1 M283.4 356.1L297.7 363.4 M297.7 363.4L304.4 360.0 M342.6 346.0L349.3 356.5 M349.3 356.5L361.7 354.6 M374.1 350.8L382.7 360.3 M382.7 360.3L392.2 356.5 M392.2 356.5L400.8 356.7 M400.8 356.7L407.5 359.4 M414.2 352.3L420.9 354.2 M420.9 354.2L428.5 354.6 M428.5 354.6L433.3 355.8 M451.6 348.9L461.2 356.5 M473.6 350.8L479.3 354.6 M479.3 354.6L492.7 359.4 M492.7 359.4L499.4 355.2 M533.8 351.8L537.6 357.1 M537.6 357.1L551.0 363.2 M551.0 363.2L557.6 360.3 M557.6 360.3L564.3 362.3 M564.3 362.3L570.0 360.5 M570.0 360.5L581.5 363.2 M581.5 363.2L591.1 362.3 M591.1 362.3L596.8 360.3 M596.8 360.3L609.2 373.3 M609.2 373.3L622.6 358.4 M622.6 358.4L642.6 359.0 M642.6 359.0L648.4 354.6 M648.4 354.6L656.0 354.2 M656.0 354.2L663.6 361.9 M663.6 361.9L665.7 357.1 M665.7 357.1L675.3 356.1 M675.3 356.1L681.0 365.7 M681.0 365.7L688.6 359.4 M688.6 359.4L694.4 366.6 M694.4 366.6L701.1 366.6 M701.1 366.6L708.7 378.5 M708.7 378.5L715.4 380.4 M715.4 380.4L727.8 373.3 M727.8 373.3L733.5 375.2 M733.5 375.2L740.2 386.7 M740.2 386.7L746.9 381.5 M746.9 381.5L754.5 383.5 M754.5 383.5L764.1 380.4 M764.1 380.4L771.7 382.9 M771.7 382.9L786.0 368.9 M786.0 368.9L793.7 368.6 M793.7 368.6L803.2 367.2 M803.2 367.2L818.5 380.4 M818.5 380.4L831.9 380.4 M831.9 380.4L836.7 378.7 M836.7 378.7L849.1 384.8 M849.1 384.8L855.8 386.7 M855.8 386.7L863.4 382.3 M863.4 382.3L868.2 383.3 M868.2 383.3L875.8 381.4" fill="none" stroke="#e0822e" stroke-width="1.1" stroke-linecap="round"/>
<path d="M14.3 356.1L18.7 357.1 M18.7 357.1L20.6 354.8 M62.6 356.5L69.3 353.3 M69.3 353.3L75.0 351.4 M75.0 351.4L82.7 350.4 M101.8 356.7L107.5 352.3 M304.4 360.0L310.1 350.4 M310.1 350.4L317.8 352.3 M317.8 352.3L321.6 352.3 M321.6 352.3L342.6 346.0 M361.7 354.6L367.4 352.7 M367.4 352.7L374.1 350.8 M407.5 359.4L414.2 352.3 M433.3 355.8L441.0 351.4 M441.0 351.4L451.6 348.9 M461.2 356.5L466.9 350.4 M466.9 350.4L473.6 350.8 M499.4 355.2L505.1 344.7 M505.1 344.7L518.5 345.6 M518.5 345.6L524.2 344.3 M524.2 344.3L533.8 351.8" fill="none" stroke="#c030e0" stroke-width="1.1" stroke-linecap="round"/>
<rect x="15" y="352" width="861" height="2" fill="#1a1aa8"/>
<rect x="15" y="394" width="861" height="2" fill="#1a1aa8"/>
<text x="38.5" y="420" font-family="Liberation Sans, sans-serif" font-size="11" fill="#e8eef2" letter-spacing="-0.35">20/Ср</text>
<text x="77.5" y="420" font-family="Liberation Sans, sans-serif" font-size="11" fill="#e8eef2" letter-spacing="-0.35">21/Чт</text>
<text x="116.5" y="420" font-family="Liberation Sans, sans-serif" font-size="11" fill="#e8eef2" letter-spacing="-0.35">22/Пт</text>
<text x="155.5" y="420" font-family="Liberation Sans, sans-serif" font-size="11" fill="#e8eef2" letter-spacing="-0.35">25/Пн</text>
<text x="194.5" y="420" font-family="Liberation Sans, sans-serif" font-size="11" fill="#e8eef2" letter-spacing="-0.35">26/Вт</text>
<text x="233.5" y="420" font-family="Liberation Sans, sans-serif" font-size="11" fill="#e8eef2" letter-spacing="-0.35">27/Ср</text>
<text x="272.5" y="420" font-family="Liberation Sans, sans-serif" font-size="11" fill="#e8eef2" letter-spacing="-0.35">28/Чт</text>
<text x="311.5" y="420" font-family="Liberation Sans, sans-serif" font-size="11" fill="#e8eef2" letter-spacing="-0.35">29/Пт</text>
<text x="356.5" y="420" font-family="Liberation Sans, sans-serif" font-size="11" fill="#e8eef2" letter-spacing="-0.35">1/Пн</text>
<text x="395.5" y="420" font-family="Liberation Sans, sans-serif" font-size="11" fill="#e8eef2" letter-spacing="-0.35">2/Вт</text>
<text x="434.5" y="420" font-family="Liberation Sans, sans-serif" font-size="11" fill="#e8eef2" letter-spacing="-0.35">3/Ср</text>
<text x="473.5" y="420" font-family="Liberation Sans, sans-serif" font-size="11" fill="#e8eef2" letter-spacing="-0.35">4/Чт</text>
<text x="512.5" y="420" font-family="Liberation Sans, sans-serif" font-size="11" fill="#e8eef2" letter-spacing="-0.35">5/Пт</text>
<text x="551.5" y="420" font-family="Liberation Sans, sans-serif" font-size="11" fill="#e8eef2" letter-spacing="-0.35">8/Пн</text>
<text x="590.5" y="420" font-family="Liberation Sans, sans-serif" font-size="11" fill="#e8eef2" letter-spacing="-0.35">9/Вт</text>
<text x="623.5" y="420" font-family="Liberation Sans, sans-serif" font-size="11" fill="#e8eef2" letter-spacing="-0.35">10/Ср</text>
<text x="663.5" y="420" font-family="Liberation Sans, sans-serif" font-size="11" fill="#e8eef2" letter-spacing="-0.35">11/Чт</text>
<text x="702.5" y="420" font-family="Liberation Sans, sans-serif" font-size="11" fill="#e8eef2" letter-spacing="-0.35">12/Пт</text>
<text x="741.5" y="420" font-family="Liberation Sans, sans-serif" font-size="11" fill="#e8eef2" letter-spacing="-0.35">15/Пн</text>
<text x="780.5" y="420" font-family="Liberation Sans, sans-serif" font-size="11" fill="#e8eef2" letter-spacing="-0.35">16/Вт</text>
<text x="819.5" y="420" font-family="Liberation Sans, sans-serif" font-size="11" fill="#e8eef2" letter-spacing="-0.35">17/Ср</text>
<text x="858.5" y="420" font-family="Liberation Sans, sans-serif" font-size="11" fill="#e8eef2" letter-spacing="-0.35">18/Чт</text>
<text x="893" y="63.5" font-family="Liberation Sans, sans-serif" font-size="11" fill="#f4f4f4" stroke="#f4f4f4" stroke-width="0.35" textLength="32.5" lengthAdjust="spacingAndGlyphs">1.1400</text>
<text x="893" y="100.5" font-family="Liberation Sans, sans-serif" font-size="11" fill="#f4f4f4" stroke="#f4f4f4" stroke-width="0.35" textLength="32.5" lengthAdjust="spacingAndGlyphs">1.1300</text>
<text x="893" y="137.5" font-family="Liberation Sans, sans-serif" font-size="11" fill="#f4f4f4" stroke="#f4f4f4" stroke-width="0.35" textLength="32.5" lengthAdjust="spacingAndGlyphs">1.1200</text>
<text x="893" y="174.5" font-family="Liberation Sans, sans-serif" font-size="11" fill="#f4f4f4" stroke="#f4f4f4" stroke-width="0.35" textLength="32.5" lengthAdjust="spacingAndGlyphs">1.1100</text>
<text x="893" y="211.5" font-family="Liberation Sans, sans-serif" font-size="11" fill="#f4f4f4" stroke="#f4f4f4" stroke-width="0.35" textLength="32.5" lengthAdjust="spacingAndGlyphs">1.1000</text>
<text x="893" y="248.5" font-family="Liberation Sans, sans-serif" font-size="11" fill="#f4f4f4" stroke="#f4f4f4" stroke-width="0.35" textLength="32.5" lengthAdjust="spacingAndGlyphs">1.0900</text>
<text x="893.5" y="294.5" font-family="Liberation Sans, sans-serif" font-size="11" fill="#f4f4f4" stroke="#f4f4f4" stroke-width="0.3" textLength="27.5" lengthAdjust="spacingAndGlyphs">+0.01</text>
<text x="893.5" y="321" font-family="Liberation Sans, sans-serif" font-size="11" fill="#f4f4f4" stroke="#f4f4f4" stroke-width="0.3" textLength="24" lengthAdjust="spacingAndGlyphs">-0.00</text>
<text x="893" y="380" font-family="Liberation Sans, sans-serif" font-size="11" fill="#f4f4f4" stroke="#f4f4f4" stroke-width="0.3" textLength="11.5" lengthAdjust="spacingAndGlyphs">50</text>
<rect x="885" y="103" width="48" height="21" fill="#ffffff"/>
<text x="893" y="117" font-family="Liberation Sans, sans-serif" font-size="11" fill="#3a3a40">1.1248</text>
<text x="16.5" y="294.2" font-family="Liberation Sans, sans-serif" font-size="11" fill="#d42a2a" textLength="29" lengthAdjust="spacingAndGlyphs">MACD</text>
<text x="16.5" y="353.2" font-family="Liberation Sans, sans-serif" font-size="11" fill="#e8862e" textLength="14.5" lengthAdjust="spacingAndGlyphs">RSI</text>
<clipPath id="pc"><rect x="15" y="38" width="870" height="238"/></clipPath>
<rect x="15" y="38" width="277" height="13.5" fill="#3b4149"/>
<g clip-path="url(#pc)"><text x="17" y="49" font-family="Liberation Sans, sans-serif" font-size="11" fill="#1c1cdc" textLength="134" lengthAdjust="spacingAndGlyphs">Exponential_Moving_Average</text>
<text x="155" y="49" font-family="Liberation Sans, sans-serif" font-size="11" fill="#dc2020" textLength="134" lengthAdjust="spacingAndGlyphs">Exponential_Moving_Average</text></g>
<rect x="14" y="37" width="31" height="22" fill="#f0f0f0"/>
<rect x="14" y="37" width="31" height="5" fill="#cfcfcf"/>
<defs><linearGradient id="lr" x1="0" y1="0" x2="0" y2="1"><stop offset="0" stop-color="#f25a5a"/><stop offset="1" stop-color="#c81c22"/></linearGradient><linearGradient id="lb" x1="0" y1="0" x2="0" y2="1"><stop offset="0" stop-color="#48b4ea"/><stop offset="1" stop-color="#1a7cc0"/></linearGradient></defs>
<rect x="18.5" y="45.5" width="9" height="9" rx="2" fill="url(#lr)" stroke="#9a1a1e"/>
<rect x="31.5" y="45.5" width="9" height="9" rx="2" fill="url(#lb)" stroke="#15608e"/>
<path d="M15.5 374.5H74Q77.5 374.5 77.5 377.5V390.5Q77.5 393.5 74 393.5H15.5Z" fill="#5c6b7e" stroke="#aebfd0" stroke-width="1"/>
<text x="22" y="388" font-family="Liberation Sans, sans-serif" font-size="11" fill="#f2f4f6">Май 2020</text>
<path d="M363.5 374.5H430Q433.5 374.5 433.5 377.5V390.5Q433.5 393.5 430 393.5H363.5Z" fill="#5c6b7e" stroke="#aebfd0" stroke-width="1"/>
<text x="370" y="388" font-family="Liberation Sans, sans-serif" font-size="11" fill="#f2f4f6">Июнь 2020</text>
</svg>
</body></html>
